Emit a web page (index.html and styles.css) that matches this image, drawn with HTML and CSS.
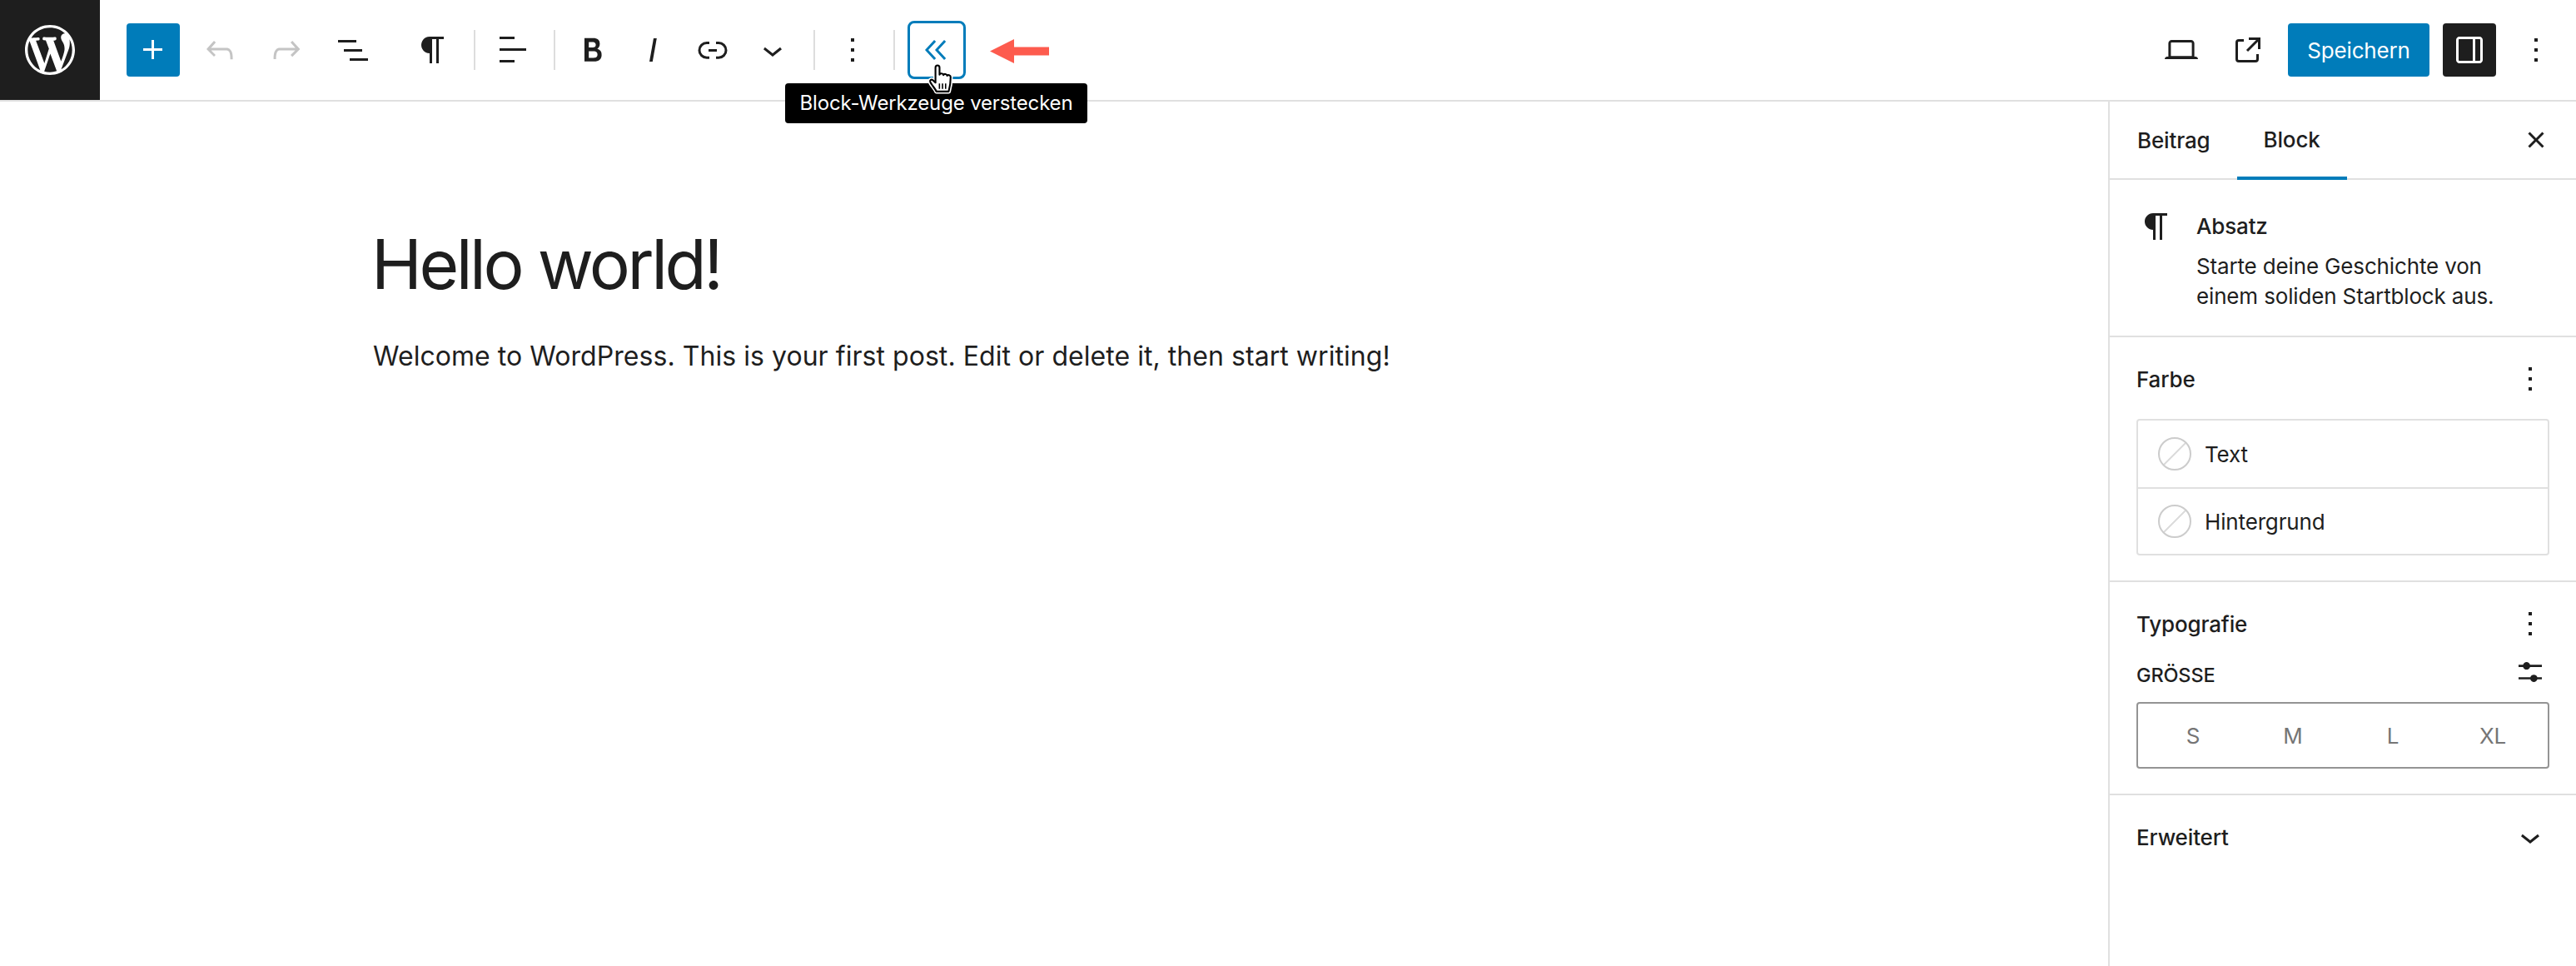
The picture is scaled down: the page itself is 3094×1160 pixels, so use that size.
FILE: index.html
```html
<!DOCTYPE html>
<html lang="de">
<head>
    <meta charset="UTF-8">
    <title>Hello world! - Beitrag bearbeiten</title>
    <link rel="stylesheet" href="styles.css">
</head>
<body>
    <header class="topbar">
        <a class="site-logo">
            <svg viewBox="0 0 20 20" width="60" height="60"><path d="M20 10c0-5.51-4.49-10-10-10C4.48 0 0 4.49 0 10c0 5.52 4.48 10 10 10 5.51 0 10-4.48 10-10zM7.78 15.37L4.37 6.22c.55-.02 1.17-.08 1.17-.08.5-.06.44-1.13-.06-1.11 0 0-1.45.11-2.37.11-.18 0-.37 0-.58-.01C4.12 2.69 6.87 1.11 10 1.11c2.33 0 4.45.87 6.05 2.34-.68-.11-1.65.39-1.65 1.58 0 .74.45 1.36.9 2.1.35.61.55 1.36.55 2.46 0 1.49-1.4 5-1.4 5l-3.03-8.37c.54-.02.82-.17.82-.17.5-.05.44-1.25-.06-1.22 0 0-1.44.12-2.38.12-.87 0-2.33-.12-2.33-.12-.5-.03-.56 1.2-.06 1.22l.92.08 1.26 3.41zM17.41 10c.24-.64.74-1.87.43-4.25.7 1.29 1.05 2.71 1.05 4.25 0 3.29-1.73 6.24-4.4 7.78.97-2.59 1.94-5.2 2.92-7.78zM6.1 18.09C3.12 16.65 1.11 13.53 1.11 10c0-1.3.23-2.48.72-3.59C3.25 10.3 4.67 14.2 6.1 18.09zm4.03-6.63l2.58 6.98c-.86.29-1.76.45-2.71.45-.79 0-1.57-.11-2.29-.33.81-2.38 1.62-4.74 2.42-7.1z"/></svg>
        </a>

        <div class="toolbar">
            <button class="tool-add">
                <svg viewBox="0 0 24 24"><path d="M11 12.5V17.5H12.5V12.5H17.5V11H12.5V6H11V11H6V12.5H11Z"/></svg>
            </button>
            <button class="tool tool-wide is-disabled">
                <svg viewBox="0 0 24 24"><path d="M18.3 11.7c-.6-.6-1.4-.9-2.3-.9H6.7l2.9-3.3-1.1-1-4.5 5L8.5 16l1-1-2.7-2.7H16c.5 0 .9.2 1.3.5 1 1 1 3.4 1 4.5v.3h1.5v-.2c0-1.5 0-4.3-1.5-5.7z"/></svg>
            </button>
            <button class="tool tool-wide is-disabled">
                <svg viewBox="0 0 24 24"><path d="M15.6 6.5l-1.1 1 2.9 3.3H8c-.9 0-1.7.3-2.3.9-1.4 1.5-1.4 4.2-1.4 5.6v.2h1.5v-.3c0-1.1 0-3.5 1-4.5.3-.3.7-.5 1.3-.5h9.2L14.5 15l1.1 1.1 4.6-4.6-4.6-5z"/></svg>
            </button>
            <button class="tool tool-wide">
                <svg viewBox="0 0 24 24"><path d="M3 6h11v1.5H3V6Zm3.5 5.5h11V13h-11v-1.5ZM21 17H10v1.5h11V17Z"/></svg>
            </button>

            <button class="tool tool-block">
                <svg viewBox="0 0 24 24"><path d="m9.99609 14v-.2251l.00391.0001v6.225h1.5v-14.5h2.5v14.5h1.5v-14.5h3v-1.5h-8.50391c-2.76142 0-5 2.23858-5 5 0 2.7614 2.23858 5 5 5z"/></svg>
            </button>
            <span class="sep"></span>
            <button class="tool">
                <svg viewBox="0 0 24 24"><path d="M13 5.5H4V4h9v1.5Zm7 7H4V11h16v1.5Zm-7 7H4V18h9v1.5Z"/></svg>
            </button>
            <span class="sep"></span>
            <button class="tool">
                <svg viewBox="0 0 24 24"><path d="M14.7 11.3c1-.6 1.5-1.6 1.5-3 0-2.3-1.3-3.4-4-3.4H7v14h5.8c1.4 0 2.5-.3 3.3-1 .8-.7 1.2-1.7 1.2-2.9.1-1.9-.8-3.1-2.6-3.7zm-5.1-4h2.3c.6 0 1.1.1 1.4.4.3.3.5.7.5 1.2s-.2 1-.5 1.2c-.3.3-.8.4-1.4.4H9.6V7.3zm4.6 9c-.4.3-1 .4-1.7.4H9.6v-3.9h2.9c.7 0 1.3.2 1.7.5.4.3.6.8.6 1.5s-.2 1.2-.6 1.5z"/></svg>
            </button>
            <button class="tool">
                <svg viewBox="0 0 24 24"><path d="M12.5 5L10 19h1.9l2.5-14z"/></svg>
            </button>
            <button class="tool">
                <svg viewBox="0 0 24 24"><path d="M10 17.389H8.444A5.194 5.194 0 1 1 8.444 7H10v1.5H8.444a3.694 3.694 0 0 0 0 7.389H10v1.5ZM14 7h1.556a5.194 5.194 0 0 1 0 10.39H14v-1.5h1.556a3.694 3.694 0 0 0 0-7.39H14V7Zm-4.5 6h5v-1.5h-5V13Z"/></svg>
            </button>
            <button class="tool">
                <svg viewBox="0 0 24 24"><path d="M17.5 11.6L12 16l-5.5-4.4.9-1.2L12 14l4.5-3.6 1 1.2z"/></svg>
            </button>
            <span class="sep"></span>
            <button class="tool">
                <svg viewBox="0 0 24 24"><path d="M13 19h-2v-2h2v2zm0-6h-2v-2h2v2zm0-6h-2V5h2v2z"/></svg>
            </button>
            <span class="sep sep-last"></span>

            <div class="collapse-wrap">
                <button class="tool-collapse">
                    <svg viewBox="0 0 24 24"><path d="M11.6 7l-1.1-1L5 12l5.5 6 1.1-1L7 12l4.6-5zm6 0l-1.1-1-5.5 6 5.5 6 1.1-1-4.6-5 4.6-5z"/></svg>
                </button>
                <div class="tooltip">Block-Werkzeuge verstecken</div>
                <svg class="hand" viewBox="0 0 30 34">
                    <path class="hand-halo" d="M9 31c-1-3-6-8-7-11-.6-2 1.400-3 3-1.800L8 21V4c0-3.400 4.600-3.400 4.600 0v8c.6-2 4-1.800 4.400.4.800-1.800 4-1.400 4.200.8.800-1.400 4-1 4 1.400 0 5-.2 9-2.200 16.400z"/>
                    <path class="hand-body" d="M9 31c-1-3-6-8-7-11-.6-2 1.400-3 3-1.800L8 21V4c0-3.400 4.600-3.400 4.600 0v8c.6-2 4-1.800 4.400.4.800-1.800 4-1.400 4.200.8.800-1.400 4-1 4 1.400 0 5-.2 9-2.200 16.400z"/>
                    <path class="hand-lines" d="M12.500 22v6M16 22v6M19.500 22v6"/>
                </svg>
            </div>

            <svg class="note-arrow" viewBox="0 0 71 29"><path d="M0 14.500 29 0v9.500h42v10H29V29z"/></svg>
        </div>

        <div class="actions">
            <button class="tool-plain">
                <svg viewBox="0 0 24 24"><path d="M20.500 16h-.7V8c0-1.100-.9-2-2-2H6.200c-1.100 0-2 .9-2 2v8h-.7c-.8 0-1.500.7-1.500 1.500h20c0-.8-.7-1.500-1.500-1.500zM5.700 8c0-.3.2-.5.5-.5h11.600c.3 0 .5.200.5.500v7.600H5.700V8z"/></svg>
            </button>
            <button class="tool-plain">
                <svg viewBox="0 0 24 24"><path d="M19.500 4.500h-7V6h4.440l-5.970 5.970 1.060 1.060L18 7.060v4.440h1.500v-7Zm-13 1a2 2 0 0 0-2 2v10a2 2 0 0 0 2 2h10a2 2 0 0 0 2-2v-3H17v3a.5.5 0 0 1-.5.5h-10a.5.5 0 0 1-.5-.5v-10a.5.5 0 0 1 .5-.5h3V5.500h-3Z"/></svg>
            </button>
            <button class="save-btn">Speichern</button>
            <button class="tool-plain is-active">
                <svg viewBox="0 0 24 24"><path d="M18 4H6c-1.100 0-2 .9-2 2v12c0 1.100.9 2 2 2h12c1.100 0 2-.9 2-2V6c0-1.100-.9-2-2-2zm-4 14.500H6c-.3 0-.5-.2-.5-.5V6c0-.3.2-.5.5-.5h8v13zm4.500-.5c0 .3-.2.5-.5.5h-2.500v-13H18c.3 0 .5.200.5.500v12z"/></svg>
            </button>
            <button class="tool-plain">
                <svg viewBox="0 0 24 24"><path d="M13 19h-2v-2h2v2zm0-6h-2v-2h2v2zm0-6h-2V5h2v2z"/></svg>
            </button>
        </div>
    </header>

    <div class="workspace">
        <main class="canvas">
            <h1 class="post-title">Hello world!</h1>
            <p class="post-text">Welcome to WordPress. This is your first post. Edit or delete it, then start writing!</p>
        </main>

        <aside class="sidebar">
            <div class="tabs">
                <span class="tab">Beitrag</span>
                <span class="tab is-current">Block</span>
                <button class="tabs-close">
                    <svg viewBox="0 0 24 24"><path d="M12 13.060l3.712 3.713 1.061-1.060L13.061 12l3.712-3.712-1.060-1.060L12 10.938 8.288 7.227l-1.061 1.060L10.939 12l-3.712 3.712 1.060 1.061L12 13.061z"/></svg>
                </button>
            </div>

            <section class="block-card">
                <svg class="block-icon" viewBox="0 0 24 24"><path d="m9.99609 14v-.2251l.00391.0001v6.225h1.5v-14.5h2.5v14.5h1.5v-14.5h3v-1.5h-8.50391c-2.76142 0-5 2.23858-5 5 0 2.7614 2.23858 5 5 5z"/></svg>
                <div>
                    <h2 class="block-name">Absatz</h2>
                    <p class="block-desc">Starte deine Geschichte von<br>einem soliden Startblock aus.</p>
                </div>
            </section>

            <section class="panel panel-color">
                <div class="panel-head">
                    <h2>Farbe</h2>
                    <svg class="panel-icon" viewBox="0 0 24 24"><path d="M13 19h-2v-2h2v2zm0-6h-2v-2h2v2zm0-6h-2V5h2v2z"/></svg>
                </div>
                <div class="color-list">
                    <div class="color-row"><span class="swatch"></span>Text</div>
                    <div class="color-row"><span class="swatch"></span>Hintergrund</div>
                </div>
            </section>

            <section class="panel panel-type">
                <div class="panel-head">
                    <h2>Typografie</h2>
                    <svg class="panel-icon" viewBox="0 0 24 24"><path d="M13 19h-2v-2h2v2zm0-6h-2v-2h2v2zm0-6h-2V5h2v2z"/></svg>
                </div>
                <div class="size-head">
                    <span class="size-label">GRÖSSE</span>
                    <svg class="size-icon" viewBox="0 0 24 24"><path d="M14.500 13.800c-1.100 0-2.100.7-2.400 1.800H4V17h8.100c.3 1 1.300 1.800 2.400 1.800s2.100-.7 2.400-1.800H20v-1.500h-3.100c-.3-1-1.300-1.700-2.400-1.700zM11.900 7c-.3-1-1.300-1.800-2.400-1.800S7.400 6 7.100 7H4v1.500h3.100c.3 1 1.300 1.800 2.400 1.800s2.100-.7 2.400-1.800H20V7h-8.100z"/></svg>
                </div>
                <div class="size-picker">
                    <span>S</span><span>M</span><span>L</span><span>XL</span>
                </div>
            </section>

            <section class="panel panel-more">
                <div class="panel-head">
                    <h2>Erweitert</h2>
                    <svg class="panel-icon" viewBox="0 0 24 24"><path d="M17.500 11.600L12 16l-5.500-4.400.9-1.200L12 14l4.500-3.600 1 1.200z"/></svg>
                </div>
            </section>
        </aside>
    </div>
</body>
</html>
```

FILE: styles.css
```css
* {
    box-sizing: border-box;
}
html, body {
    height: 100%;
}
body {
    margin: 0;
    display: flex;
    flex-direction: column;
    font-family: Inter, "Liberation Sans", sans-serif;
    letter-spacing: -0.15px;
    color: #1e1e1e;
    background-color: #fff;
    overflow: hidden;
}
button {
    border: 0;
    padding: 0;
    background: none;
    font-family: inherit;
    letter-spacing: inherit;
    color: inherit;
}
svg {
    fill: currentColor;
    display: block;
}
h1, h2, p {
    margin: 0;
    font-weight: 400;
}

/* top bar */
.topbar {
    display: flex;
    align-items: center;
    height: 122px;
    flex: none;
    border-bottom: 2px solid #e0e0e0;
}
.site-logo {
    width: 120px;
    height: 120px;
    display: flex;
    align-items: center;
    justify-content: center;
    background-color: #1e1e1e;
    color: #fff;
}
.toolbar {
    display: flex;
    align-items: center;
    padding-left: 32px;
}
.toolbar button svg, .actions button svg {
    width: 48px;
    height: 48px;
}
.tool-add {
    width: 64px;
    height: 64px;
    display: flex;
    align-items: center;
    justify-content: center;
    background-color: #007cba;
    color: #fff;
    border-radius: 4px;
}
.tool {
    width: 72px;
    height: 64px;
    display: flex;
    align-items: center;
    justify-content: center;
}
.tool-wide {
    width: 80px;
}
.tool-add + .tool-wide {
    margin-left: 8px;
}
.tool-block {
    margin-left: 20px;
}
.is-disabled {
    color: #c4c4c4;
}
.sep {
    width: 2px;
    height: 48px;
    margin: 0 9px 0 13px;
    background-color: #ddd;
}
.sep-last {
    margin-right: 15px;
}
.collapse-wrap {
    position: relative;
}
.tool-collapse {
    width: 70px;
    height: 70px;
    display: flex;
    align-items: center;
    justify-content: center;
    border: 3px solid #007cba;
    border-radius: 8px;
    color: #007cba;
}
.tooltip {
    position: absolute;
    top: 75px;
    left: -147px;
    width: 363px;
    height: 48px;
    padding-bottom: 2px;
    display: flex;
    align-items: center;
    justify-content: center;
    background-color: #000;
    color: #fff;
    font-size: 24px;
    border-radius: 4px;
    white-space: nowrap;
}
.hand {
    position: absolute;
    top: 52px;
    left: 25px;
    width: 32px;
    height: 36px;
    overflow: visible;
}
.hand-halo {
    fill: #fff;
    stroke: #fff;
    stroke-width: 5;
    stroke-linejoin: round;
}
.hand-body {
    fill: #fff;
    stroke: #000;
    stroke-width: 2;
    stroke-linejoin: round;
}
.hand-lines {
    fill: none;
    stroke: #000;
    stroke-width: 1.5;
}
.note-arrow {
    width: 71px;
    height: 29px;
    margin: 2px 0 0 29px;
    fill: #fd5b4e;
}
.actions {
    margin-left: auto;
    display: flex;
    align-items: center;
    gap: 16px;
    padding-right: 16px;
}
.tool-plain {
    width: 64px;
    height: 64px;
    display: flex;
    align-items: center;
    justify-content: center;
    border-radius: 4px;
}
.is-active {
    background-color: #1e1e1e;
    color: #fff;
}
.save-btn {
    width: 170px;
    height: 64px;
    background-color: #007cba;
    color: #fff;
    font-size: 26px;
    font-weight: 400;
    border-radius: 4px;
}

/* content */
.workspace {
    flex: 1;
    display: flex;
    min-height: 0;
}
.canvas {
    flex: 1;
    padding: 146px 0 0 448px;
}
.post-title {
    margin-left: -2px;
    font-size: 82px;
    line-height: 100px;
    letter-spacing: -3.5px;
    color: #1e1e1e;
}
.post-text {
    margin-top: 34px;
    font-size: 32px;
    line-height: 52px;
    letter-spacing: 0.05px;
    color: #1e1e1e;
}

/* sidebar */
.sidebar {
    width: 562px;
    flex: none;
    border-left: 2px solid #e0e0e0;
}
.tabs {
    display: flex;
    height: 94px;
    border-bottom: 2px solid #e0e0e0;
}
.tab {
    padding: 0 32px 0 33px;
    display: flex;
    align-items: center;
    font-size: 26px;
    font-weight: 500;
}
.tab.is-current {
    margin-bottom: -2px;
    padding: 0 32px;
    border-bottom: 4px solid #007cba;
}
.tabs-close {
    margin-left: auto;
    margin-right: 24px;
    align-self: center;
}
.tabs-close svg {
    width: 48px;
    height: 48px;
}
.block-card {
    display: flex;
    height: 189px;
    padding: 38px 32px 0 32px;
    border-bottom: 2px solid #e0e0e0;
    gap: 24px;
}
.block-icon {
    width: 48px;
    height: 48px;
    margin-top: -6px;
    flex: none;
}
.block-name {
    font-size: 26px;
    font-weight: 500;
    line-height: 36px;
}
.block-desc {
    margin-top: 12px;
    font-size: 26px;
    line-height: 36px;
}
.panel {
    padding: 0 32px;
    border-bottom: 2px solid #e0e0e0;
}
.panel-head {
    display: flex;
    align-items: center;
    justify-content: space-between;
    height: 48px;
}
.panel-head h2 {
    font-size: 26px;
    font-weight: 500;
}
.panel-icon {
    width: 48px;
    height: 48px;
    margin-right: -1px;
}
.panel-color {
    height: 294px;
    padding-top: 26px;
}
.color-list {
    margin-top: 24px;
    border: 2px solid #e0e0e0;
    border-radius: 4px;
}
.color-row {
    height: 80px;
    display: flex;
    align-items: center;
    gap: 16px;
    padding-left: 24px;
    font-size: 26px;
}
.color-row + .color-row {
    border-top: 2px solid #e0e0e0;
}
.swatch {
    width: 40px;
    height: 40px;
    border-radius: 50%;
    border: 2px solid #ccc;
    background: linear-gradient(-45deg, transparent 48.5%, #ddd 48.5%, #ddd 51.5%, transparent 51.5%);
}
.panel-type {
    height: 256px;
    padding-top: 26px;
}
.size-head {
    margin-top: 10px;
    display: flex;
    align-items: center;
    justify-content: space-between;
    height: 48px;
    font-size: 23.5px;
    font-weight: 500;
}
.size-label {
    margin-top: 6px;
}
.size-icon {
    width: 42px;
    height: 42px;
    margin-right: 2px;
}
.size-picker {
    margin-top: 12px;
    height: 80px;
    display: grid;
    grid-template-columns: repeat(4, 1fr);
    padding: 0 6px;
    align-items: center;
    text-align: center;
    border: 2px solid #949494;
    border-radius: 4px;
    font-size: 26px;
    color: #757575;
}
.panel-more {
    border-bottom: 0;
    padding-top: 26px;
}
```
